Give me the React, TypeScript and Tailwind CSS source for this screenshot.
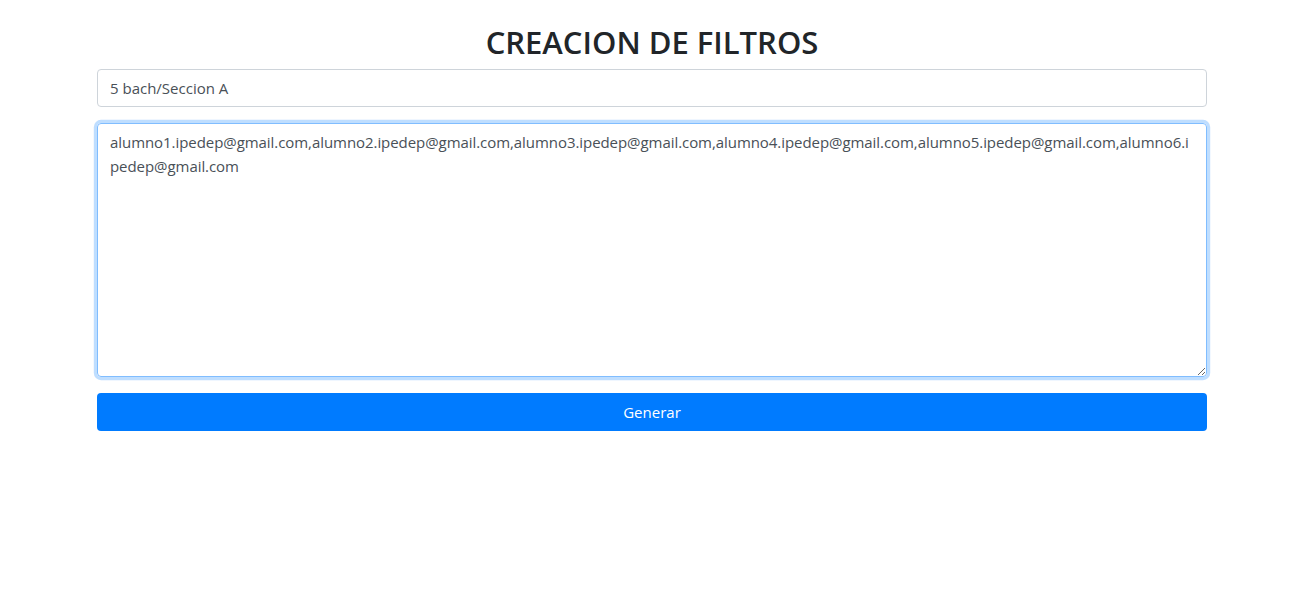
import React, { useState } from 'react';

const EMAILS =
  'alumno1.ipedep@gmail.com,alumno2.ipedep@gmail.com,alumno3.ipedep@gmail.com,alumno4.ipedep@gmail.com,alumno5.ipedep@gmail.com,alumno6.ipedep@gmail.com';

const App: React.FC = () => {
  const [seccion, setSeccion] = useState('5 bach/Seccion A');
  const [correos, setCorreos] = useState(EMAILS);

  return (
    <div className="min-h-screen bg-white font-['Open_Sans',sans-serif] text-[#212529]">
      <div className="mx-auto w-[1140px] px-[15px] pt-[23px]">
        <h2 className="mb-2 text-center text-[31px] leading-[38px] font-semibold">CREACION DE FILTROS</h2>

        <input
          type="text"
          value={seccion}
          onChange={(e) => setSeccion(e.target.value)}
          className="mb-4 block h-[38px] w-full rounded border border-[#ced4da] px-3 py-1.5 text-[15px] leading-6 text-[#495057] outline-none"
        />

        <textarea
          value={correos}
          onChange={(e) => setCorreos(e.target.value)}
          className="mb-4 block h-[254px] w-full rounded border border-[#80bdff] px-3 py-1.5 text-[15px] leading-6 tracking-[-0.06px] text-[#495057] shadow-[0_0_0_3.2px_rgba(0,123,255,0.25)] outline-none [overflow-wrap:anywhere]"
        />

        <button
          type="button"
          className="block h-[38px] w-full rounded bg-[#007bff] text-[15px] leading-6 font-normal text-white"
        >
          Generar
        </button>
      </div>
    </div>
  );
};

export default App;
